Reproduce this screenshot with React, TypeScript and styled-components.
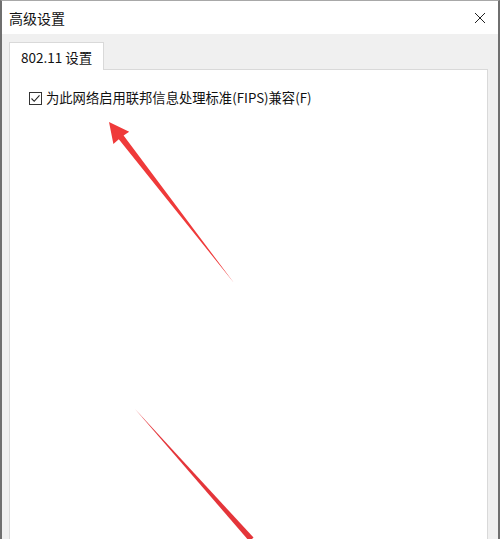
import React, { FC } from 'react';
import styled, { createGlobalStyle } from 'styled-components';

const GlobalStyle = createGlobalStyle`
    html, body{
        margin: 0;
        padding: 0;
        background: #ffffff;
    }
    body{
        font-family: "Noto Sans CJK SC", "Noto Sans", "Liberation Sans", sans-serif;
        color: #000;
    }
`;

const App: FC = () => {
    return (
        <>
            <GlobalStyle/>
            <Window>
                <TitleBar>
                    <Title>高级设置</Title>
                    <CloseButton aria-label="关闭">
                        <svg width="12" height="12" viewBox="0 0 12 12">
                            <path d="M1 1 L11 11 M11 1 L1 11" stroke="#222" strokeWidth="1" fill="none"/>
                        </svg>
                    </CloseButton>
                </TitleBar>
                <Body>
                    <TabStrip>
                        <Tab>802.11 设置</Tab>
                    </TabStrip>
                    <Panel>
                        <CheckRow>
                            <CheckBox>
                                <svg width="11" height="11" viewBox="0 0 11 11">
                                    <path d="M1.5 5.5 L4.2 8.3 L9.5 2.3" stroke="#222" strokeWidth="1.1" fill="none"/>
                                </svg>
                            </CheckBox>
                            <CheckLabel>为此网络启用联邦信息处理标准(FIPS)兼容(F)</CheckLabel>
                        </CheckRow>
                    </Panel>
                </Body>
                <Annotations width="500" height="539" viewBox="0 0 500 539">
                    <polygon
                        points="109,122 129.2,131.7 123.6,135.4 234,283 118.8,139.2 113.4,143.9"
                        fill="#ef3a3a"
                    />
                    <polygon
                        points="135,409 253.5,537.5 249.5,541.5"
                        fill="#e4353a"
                    />
                </Annotations>
            </Window>
        </>
    );
};

const Window = styled.div`
    position: relative;
    width: 500px;
    height: 539px;
    box-sizing: border-box;
    display: flex;
    flex-direction: column;
    background-color: #f0f0f0;
    border-left: 2px solid #6f6f6f;
    border-right: 2px solid #6f6f6f;
    border-top: 1px solid #a8a8a8;
    overflow: hidden;
`;

const TitleBar = styled.div`
    height: 33px;
    flex-shrink: 0;
    display: flex;
    align-items: center;
    justify-content: space-between;
    background-color: #ffffff;
    padding-left: 7px;
`;

const Title = styled.span`
    font-size: 14px;
    line-height: 1;
    color: #111;
`;

const CloseButton = styled.div`
    width: 36px;
    height: 33px;
    display: flex;
    align-items: center;
    justify-content: center;
`;

const Body = styled.div`
    flex: 1;
    display: flex;
    flex-direction: column;
    padding: 8px 10px 0 7px;
`;

const TabStrip = styled.div`
    display: flex;
    position: relative;
    z-index: 1;
    margin-bottom: -1px;
`;

const Tab = styled.div`
    height: 28px;
    box-sizing: border-box;
    padding: 0 11px;
    display: flex;
    align-items: center;
    background-color: #ffffff;
    border: 1px solid #d9d9d9;
    border-bottom: none;
    font-size: 13.5px;
    color: #111;
`;

const Panel = styled.div`
    flex: 1;
    background-color: #ffffff;
    border: 1px solid #d9d9d9;
    border-bottom: none;
    padding: 19px 19px 0 19px;
`;

const CheckRow = styled.label`
    display: flex;
    align-items: center;
    gap: 4px;
`;

const CheckBox = styled.span`
    width: 13px;
    height: 13px;
    box-sizing: border-box;
    border: 1px solid #333;
    display: flex;
    align-items: center;
    justify-content: center;
    background: #fff;
`;

const CheckLabel = styled.span`
    font-size: 13.3px;
    color: #111;
    line-height: 18px;
`;

const Annotations = styled.svg`
    position: absolute;
    left: -2px;
    top: -1px;
    pointer-events: none;
`;

export default App;
